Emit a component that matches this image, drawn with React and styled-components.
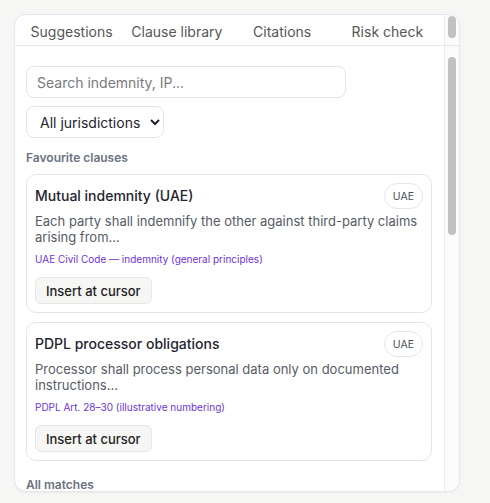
import React, { useLayoutEffect, useRef, useState } from "react";
import styled, { createGlobalStyle } from "styled-components";

const GlobalStyle = createGlobalStyle`
  html, body {
    margin: 0;
    padding: 0;
    background: #f6f6f5;
  }
  body {
    font-family: Inter, "Noto Sans", "Liberation Sans", sans-serif;
    color: #1f2430;
  }
  * { box-sizing: border-box; }
`;

const Page = styled.div`
  padding: 14px;
`;

const Panel = styled.section`
  width: 446px;
  height: 478px;
  display: flex;
  flex-direction: column;
  background: #ffffff;
  border: 1px solid #e6e6ee;
  border-radius: 12px;
  overflow: hidden;
  box-shadow: 0 1px 2px rgba(20, 20, 40, 0.05);
`;

/* A row holding a scrolling region and its always-visible rail */
const ScrollRow = styled.div`
  display: flex;
  min-height: 0;
  ${(p) => (p.$grow ? "flex: 1;" : "flex: none; height: 31px; border-bottom: 1px solid #e6e6ee;")}
`;

const Rail = styled.div`
  flex: none;
  width: 15px;
  padding: ${(p) => p.$insetTop}px 3px ${(p) => p.$insetBottom}px 3px;
  background: #fbfbfb;
  border-left: 1px solid #ebebef;
`;

const Thumb = styled.div`
  width: 8px;
  border-radius: 4px;
  background: #c1c1c1;
`;

const TabBar = styled.nav`
  flex: 1;
  min-width: 0;
  display: grid;
  grid-template-columns: repeat(4, 1fr);
  padding: 0 4px;
  overflow-y: auto;
  scrollbar-width: none;
`;

const Tab = styled.button`
  appearance: none;
  background: none;
  border: 0;
  border-bottom: 2px solid ${(p) => (p.$active ? "#6d28d9" : "transparent")};
  padding: 8px 0;
  font: inherit;
  font-size: 14px;
  line-height: 18px;
  color: #565656;
  white-space: nowrap;
  cursor: pointer;
`;

const Body = styled.div`
  flex: 1;
  min-width: 0;
  overflow-y: auto;
  scrollbar-width: none;
  padding: 20px 12px 43px 11px;
`;

const Search = styled.input`
  display: block;
  width: 320px;
  height: 32px;
  padding: 0 10px;
  border: 1px solid #e4e4ec;
  border-radius: 8px;
  font: inherit;
  font-size: 14px;
  color: #1f2430;
  outline: none;
  &::placeholder {
    color: #7a7a80;
  }
`;

const Select = styled.select`
  display: block;
  margin-top: 8px;
  height: 32px;
  padding: 0 6px 0 9px;
  border: 1px solid #e4e4ec;
  border-radius: 8px;
  background: #ffffff;
  font: inherit;
  font-size: 14px;
  color: #1f2430;
`;

const SectionLabel = styled.h3`
  margin: ${(p) => (p.$first ? "12px" : "16px")} 0 8px;
  font-size: 12px;
  line-height: 16px;
  font-weight: 600;
  color: #6b7280;
`;

const CardList = styled.div`
  display: flex;
  flex-direction: column;
  gap: 9px;
`;

const Card = styled.article`
  border: 1px solid #e4e4ef;
  border-radius: 10px;
  padding: 8px;
`;

const CardHead = styled.div`
  display: flex;
  align-items: center;
  justify-content: space-between;
  gap: 8px;
`;

const CardTitle = styled.h4`
  margin: 0;
  font-size: 14px;
  line-height: 20px;
  font-weight: 500;
  color: #1f2430;
`;

const Badge = styled.span`
  flex: none;
  height: 26px;
  padding: 0 8px;
  display: inline-flex;
  align-items: center;
  border: 1px solid #e3e6ee;
  border-radius: 999px;
  font-size: 10.5px;
  color: #4a4f5a;
`;

const Excerpt = styled.p`
  margin: 4px 0 0;
  font-size: 13px;
  line-height: 16px;
  color: #565b66;
`;

const Cite = styled.div`
  margin-top: 7px;
  font-size: 10px;
  line-height: 14px;
  color: #6d32d6;
`;

const InsertButton = styled.button`
  display: block;
  margin-top: 11px;
  height: 27px;
  padding: 0 10px;
  border: 1px solid #e7e7e7;
  border-radius: 6px;
  background: #f6f6f5;
  font: inherit;
  font-size: 13px;
  font-weight: 500;
  color: #222222;
  cursor: pointer;
`;

const tabs = ["Suggestions", "Clause library", "Citations", "Risk check"];

const favourites = [
  {
    title: "Mutual indemnity (UAE)",
    tag: "UAE",
    text: "Each party shall indemnify the other against third-party claims arising from...",
    cite: "UAE Civil Code — indemnity (general principles)",
  },
  {
    title: "PDPL processor obligations",
    tag: "UAE",
    text: "Processor shall process personal data only on documented instructions...",
    cite: "PDPL Art. 28–30 (illustrative numbering)",
  },
];

const matches = [
  {
    title: "IP assignment (work product)",
    tag: "DIFC",
    text: "All intellectual property created in the course of the Services shall vest in...",
    cite: "DIFC Law No. 4 of 2019 — assignment",
  },
  {
    title: "Indemnity cap",
    tag: "KSA",
    text: "The aggregate liability of each party under this clause shall not exceed...",
    cite: "Saudi Civil Transactions Law — liability",
  },
  {
    title: "IP licence back",
    tag: "ADGM",
    text: "The Customer grants the Supplier a non-exclusive licence to use the deliverables...",
    cite: "ADGM IP Regulations (illustrative)",
  },
  {
    title: "Indemnity procedure",
    tag: "UAE",
    text: "The indemnified party shall promptly notify the indemnifying party of any claim...",
    cite: "UAE Civil Code — notice of claims",
  },
];

// Tracks a scroll container and sizes/positions a rail thumb for it
function useThumb(insetTop, insetBottom) {
  const ref = useRef(null);
  const [thumb, setThumb] = useState({ top: 0, height: 0 });

  useLayoutEffect(() => {
    const el = ref.current;
    if (!el) return undefined;
    const update = () => {
      const { scrollTop, scrollHeight, clientHeight } = el;
      const track = clientHeight - insetTop - insetBottom;
      if (scrollHeight <= clientHeight) {
        setThumb({ top: 0, height: 0 });
        return;
      }
      const height = Math.max(18, (track * clientHeight) / scrollHeight);
      const top = ((track - height) * scrollTop) / (scrollHeight - clientHeight);
      setThumb({ top, height });
    };
    update();
    el.addEventListener("scroll", update);
    window.addEventListener("resize", update);
    return () => {
      el.removeEventListener("scroll", update);
      window.removeEventListener("resize", update);
    };
  }, [insetTop, insetBottom]);

  return [ref, thumb];
}

function ScrollRail({ thumb, insetTop, insetBottom }) {
  return (
    <Rail $insetTop={insetTop} $insetBottom={insetBottom} aria-hidden="true">
      <Thumb style={{ height: thumb.height, transform: `translateY(${thumb.top}px)` }} />
    </Rail>
  );
}

function ClauseCard({ clause }) {
  return (
    <Card>
      <CardHead>
        <CardTitle>{clause.title}</CardTitle>
        <Badge>{clause.tag}</Badge>
      </CardHead>
      <Excerpt>{clause.text}</Excerpt>
      <Cite>{clause.cite}</Cite>
      <InsertButton type="button">Insert at cursor</InsertButton>
    </Card>
  );
}

export default function App() {
  const [tabRef, tabThumb] = useThumb(1, 3);
  const [bodyRef, bodyThumb] = useThumb(11, 2);

  return (
    <Page>
      <GlobalStyle />
      <Panel>
        <ScrollRow>
          <TabBar ref={tabRef}>
            {tabs.map((t) => (
              <Tab key={t} $active={t === "Clause library"}>
                {t}
              </Tab>
            ))}
          </TabBar>
          <ScrollRail thumb={tabThumb} insetTop={1} insetBottom={3} />
        </ScrollRow>
        <ScrollRow $grow>
          <Body ref={bodyRef}>
            <Search placeholder="Search indemnity, IP..." />
            <Select defaultValue="all">
              <option value="all">All jurisdictions</option>
              <option value="uae">UAE</option>
              <option value="difc">DIFC</option>
              <option value="adgm">ADGM</option>
              <option value="ksa">KSA</option>
            </Select>
            <SectionLabel $first>Favourite clauses</SectionLabel>
            <CardList>
              {favourites.map((c) => (
                <ClauseCard key={c.title} clause={c} />
              ))}
            </CardList>
            <SectionLabel>All matches</SectionLabel>
            <CardList>
              {matches.map((c) => (
                <ClauseCard key={c.title} clause={c} />
              ))}
            </CardList>
          </Body>
          <ScrollRail thumb={bodyThumb} insetTop={11} insetBottom={2} />
        </ScrollRow>
      </Panel>
    </Page>
  );
}
